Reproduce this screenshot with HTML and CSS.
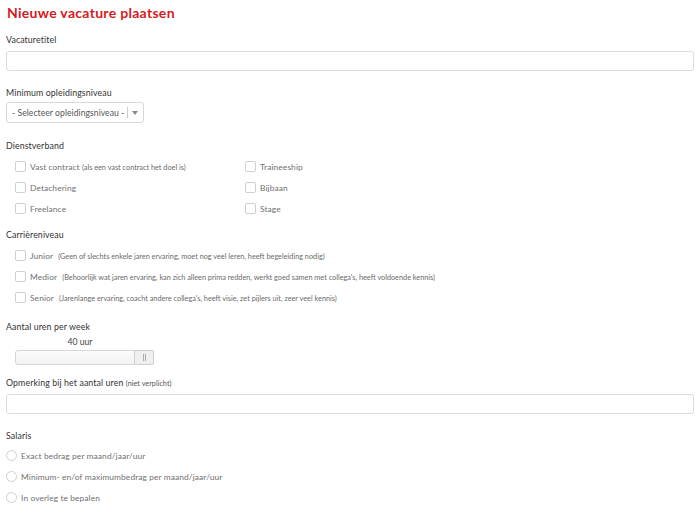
FILE: index.html
```html
<!DOCTYPE html>
<html lang="nl">
<head>
<meta charset="utf-8">
<title>Nieuwe vacature plaatsen</title>
<link rel="stylesheet" href="styles.css">
</head>
<body>
<div class="page">
  <h1 class="title">Nieuwe vacature plaatsen</h1>

  <div class="field f-title">
    <div class="label">Vacaturetitel</div>
    <div class="input"></div>
  </div>

  <div class="field f-level">
    <div class="label">Minimum opleidingsniveau</div>
    <div class="select">
      <span class="select-text">- Selecteer opleidingsniveau -</span>
      <span class="select-sep"></span>
      <span class="select-arrow"></span>
    </div>
  </div>

  <div class="field f-dienst">
    <div class="label">Dienstverband</div>
    <div class="check-grid">
      <div class="opt"><span class="box"></span><span>Vast contract <small>(als een vast contract het doel is)</small></span></div>
      <div class="opt"><span class="box"></span><span>Traineeship</span></div>
      <div class="opt"><span class="box"></span><span>Detachering</span></div>
      <div class="opt"><span class="box"></span><span>Bijbaan</span></div>
      <div class="opt"><span class="box"></span><span>Freelance</span></div>
      <div class="opt"><span class="box"></span><span>Stage</span></div>
    </div>
  </div>

  <div class="field f-carriere">
    <div class="label">Carrièreniveau</div>
    <div class="check-list">
      <div class="opt"><span class="box"></span><span>Junior <small>(Geen of slechts enkele jaren ervaring, moet nog veel leren, heeft begeleiding nodig)</small></span></div>
      <div class="opt"><span class="box"></span><span>Medior <small>(Behoorlijk wat jaren ervaring, kan zich alleen prima redden, werkt goed samen met collega's, heeft voldoende kennis)</small></span></div>
      <div class="opt"><span class="box"></span><span>Senior <small>(Jarenlange ervaring, coacht andere collega's, heeft visie, zet pijlers uit, zeer veel kennis)</small></span></div>
    </div>
  </div>

  <div class="field f-uren">
    <div class="label">Aantal uren per week</div>
    <div class="slider-wrap">
      <div class="slider-value">40 uur</div>
      <div class="slider">
        <div class="slider-handle"><span></span><span></span></div>
      </div>
    </div>
  </div>

  <div class="field f-opm">
    <div class="label">Opmerking bij het aantal uren <small>(niet verplicht)</small></div>
    <div class="input"></div>
  </div>

  <div class="field f-salaris">
    <div class="label">Salaris</div>
    <div class="radio-list">
      <div class="ropt"><span class="radio"></span><span>Exact bedrag per maand/jaar/uur</span></div>
      <div class="ropt"><span class="radio"></span><span>Minimum- en/of maximumbedrag per maand/jaar/uur</span></div>
      <div class="ropt"><span class="radio"></span><span>In overleg te bepalen</span></div>
    </div>
  </div>
</div>
</body>
</html>
```

FILE: styles.css
```css
* { box-sizing: border-box; }
html, body { margin: 0; padding: 0; background: #fff; }
body {
  font-family: Lato, "Open Sans", "Liberation Sans", sans-serif;
  color: #333;
  width: 700px;
  height: 508px;
  overflow: hidden;
}
.page { padding: 3px 6px 0 6px; }
.title {
  margin: 0 0 0 1px;
  font-size: 14px;
  line-height: 20px;
  font-weight: 700;
  color: #d31a21;
  letter-spacing: 0.3px;
}
.label {
  font-size: 8.8px;
  line-height: 14px;
  color: #333;
  letter-spacing: 0.1px;
}
.label small { font-size: 7.3px; color: #555; letter-spacing: 0; }
.f-title { margin-top: 10px; }
.f-title .label { margin-bottom: 4px; }
.input {
  height: 20px;
  width: 688px;
  border: 1px solid #dcdcdc;
  border-radius: 3px;
  background: #fff;
}
.f-level { margin-top: 15px; }
.f-level .label { margin-bottom: 2px; }
.select {
  display: flex;
  align-items: center;
  width: 138px;
  height: 21px;
  border: 1px solid #d8d8d8;
  border-radius: 3px;
  padding-left: 5px;
}
.select-text { font-size: 8.6px; color: #555; white-space: nowrap; letter-spacing: 0.05px; }
.select-sep { width: 1px; height: 11px; background: #ccc; margin-left: 3px; }
.select-arrow {
  width: 0; height: 0;
  border-left: 3.5px solid transparent;
  border-right: 3.5px solid transparent;
  border-top: 4px solid #888;
  margin-left: 4px;
}
.f-dienst { margin-top: 16px; }
.check-grid {
  display: grid;
  grid-template-columns: 230px 1fr;
  padding-left: 9px;
  margin-top: 3px;
}
.opt {
  display: flex;
  align-items: center;
  height: 21px;
  font-size: 8.4px;
  color: #707070;
  white-space: nowrap;
  letter-spacing: 0.1px;
}
.opt small { font-size: 7.3px; color: #6a6a6a; letter-spacing: 0; }
.box {
  width: 11px;
  height: 11px;
  border: 1px solid #cfcfcf;
  border-radius: 2px;
  margin-right: 4px;
  flex: none;
  background: #fff;
}
.f-carriere { margin-top: 9px; }
.check-list { padding-left: 9px; margin-top: 3px; }
.check-list .opt small { margin-left: 3px; }
.f-uren { margin-top: 12px; }
.slider-wrap { padding-left: 9px; }
.slider-value {
  font-size: 8.6px;
  line-height: 14px;
  text-align: center;
  color: #444;
  width: 130px;
  margin-top: 1px;
}
.slider {
  position: relative;
  width: 139px;
  height: 15px;
  border: 1px solid #d6d6d6;
  border-radius: 3px;
  background: linear-gradient(#fbfbfb, #f2f2f2);
  margin-top: 1px;
}
.slider-handle {
  position: absolute;
  right: -1px;
  top: -1px;
  width: 20px;
  height: 15px;
  border: 1px solid #d0d0d0;
  border-radius: 2px;
  background: #f0f0f0;
  display: flex;
  justify-content: center;
  align-items: center;
  gap: 1px;
}
.slider-handle span { width: 1px; height: 7px; background: #aaa; }
.f-opm { margin-top: 11px; }
.f-opm .label { margin-bottom: 3px; }
.f-salaris { margin-top: 15px; }
.radio-list { margin-top: 2px; }
.ropt {
  display: flex;
  align-items: center;
  height: 21px;
  font-size: 8.4px;
  color: #707070;
  letter-spacing: 0.1px;
}
.radio {
  width: 11px;
  height: 11px;
  border: 1px solid #cfcfcf;
  border-radius: 50%;
  margin-right: 4px;
  flex: none;
}
```
